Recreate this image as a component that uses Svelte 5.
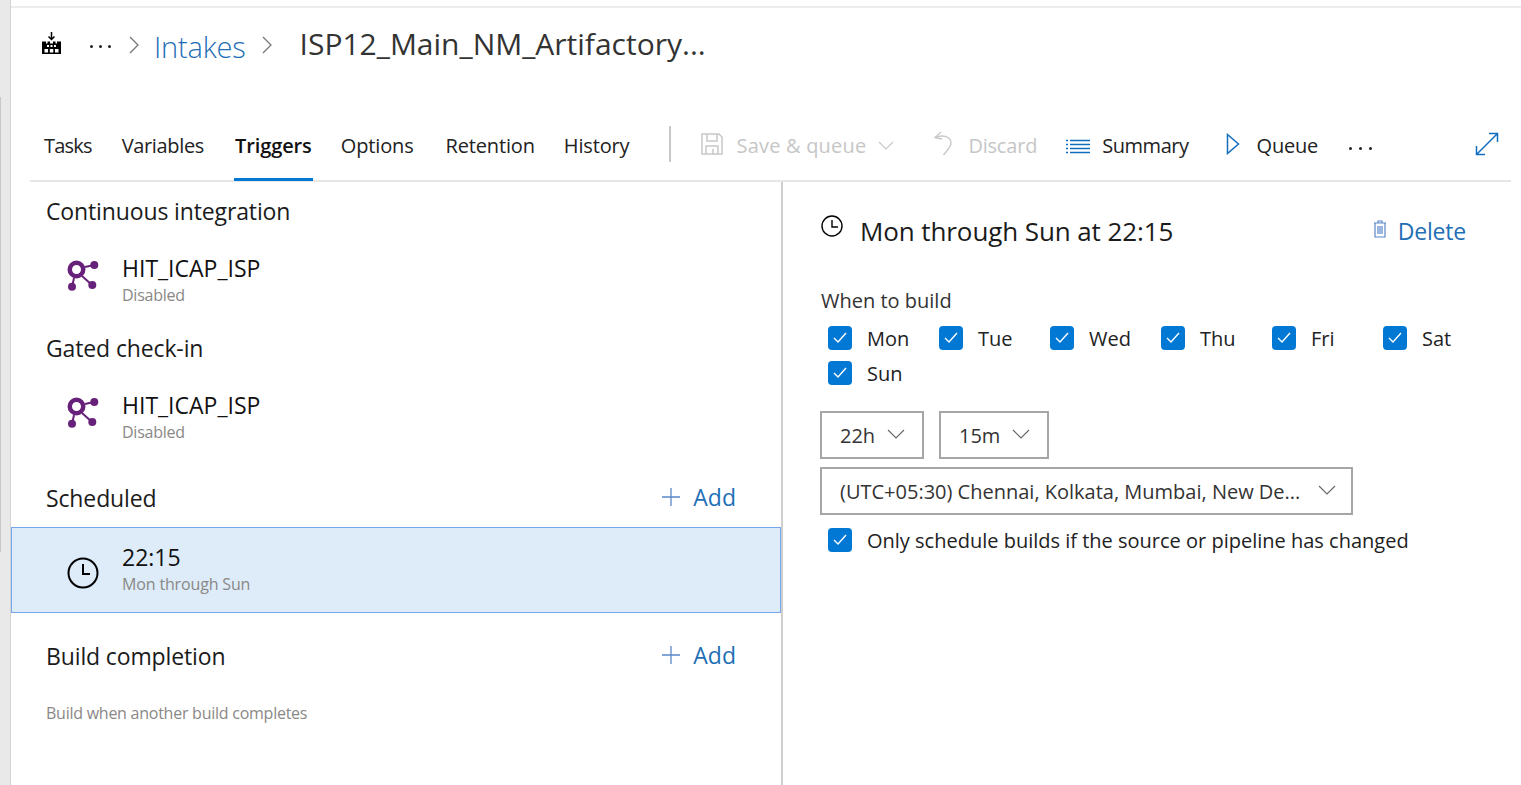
<script>
  const days1 = ['Mon','Tue','Wed','Thu','Fri','Sat'];
  const tabs = ['Tasks','Variables','Triggers','Options','Retention','History'];
</script>

{#snippet repoIcon()}
  <svg class="repo" viewBox="66 258 34 34" width="34" height="34">
    <g stroke="#68217a" fill="#68217a">
      <path d="M85 266l9-2M82 275l10 9M74 277l-2 9" stroke-width="2" fill="none"/>
      <circle cx="76.500" cy="268.500" r="6.750" fill="none" stroke-width="4.500"/>
      <circle cx="94.300" cy="264" r="4" stroke="none"/>
      <circle cx="92.300" cy="284" r="4" stroke="none"/>
      <circle cx="72" cy="285.700" r="4" stroke="none"/>
    </g>
  </svg>
{/snippet}

{#snippet tick()}
  <span class="box"><svg viewBox="0 0 14 11" width="14" height="11"><path d="M1 6l4 4 8-9" fill="none" stroke="#fff" stroke-width="1.400"/></svg></span>
{/snippet}

{#snippet caret()}
  <svg viewBox="0 0 18 10" width="18" height="10"><path d="M1 1l8 8 8-8" fill="none" stroke="#666" stroke-width="1.100"/></svg>
{/snippet}

{#snippet plus()}
  <svg viewBox="0 0 18 18" width="18" height="18"><path d="M9 0v18M0 9h18" stroke="#5b87c9" stroke-width="1.300"/></svg>
{/snippet}

<div class="page">
  <div class="gutter"><div class="gutter-mark"></div></div>
  <div class="main">
    <header class="crumbs">
      <svg class="factory" viewBox="0 0 19 22" width="19" height="22">
        <path d="M9.500 0v7M6.500 4.500l3 3 3-3" fill="none" stroke="#000" stroke-width="1.500"/>
        <path d="M0 22V9.500h4v2h1.500v-2h2.500v2h3v-2h2.500v2H15v-2h4V22z" fill="#000"/>
        <rect x="2.500" y="17" width="3.500" height="3.500" fill="#fff"/><rect x="7.800" y="17" width="3.500" height="3.500" fill="#fff"/><rect x="13" y="17" width="3.500" height="3.500" fill="#fff"/>
        <rect x="5" y="13" width="2" height="2" fill="#fff"/><rect x="8.500" y="13" width="2" height="2" fill="#fff"/><rect x="12" y="13" width="2" height="2" fill="#fff"/>
      </svg>
      <span class="dots crumb-dots"><i></i><i></i><i></i></span>
      <svg class="chev" viewBox="0 0 10 18" width="10" height="18"><path d="M1 1l8 8-8 8" fill="none" stroke="#777" stroke-width="1.300"/></svg>
      <span class="intakes">Intakes</span>
      <svg class="chev chev2" viewBox="0 0 10 18" width="10" height="18"><path d="M1 1l8 8-8 8" fill="none" stroke="#777" stroke-width="1.300"/></svg>
      <span class="title">ISP12_Main_NM_Artifactory...</span>
    </header>

    <nav class="bar">
      <div class="tabs">
        {#each tabs as t}
          <span class="tab" class:active={t === 'Triggers'}>{t}</span>
        {/each}
      </div>
      <div class="vsep"></div>
      <div class="cmd disabled save">
        <svg class="lift" viewBox="0 0 22 22" width="22" height="22"><path d="M1 1h17l3 3v17H1zM6 1v7h10V1M5 21v-8h12v8M12 16v5" fill="none" stroke="#c8c8c8" stroke-width="1.500"/></svg>
        <span>Save &amp; queue</span>
        <svg class="dd" viewBox="0 0 16 9" width="16" height="9"><path d="M1 1l7 7 7-7" fill="none" stroke="#c8c8c8" stroke-width="1.200"/></svg>
      </div>
      <div class="cmd disabled discard">
        <svg class="lift" viewBox="0 0 20 26" width="20" height="26"><path d="M8 1L2 6.500l7 1.500M2.500 6.500C10 3 18 6 18 12c0 4-3 6-7.500 12" fill="none" stroke="#c8c8c8" stroke-width="1.400"/></svg>
        <span>Discard</span>
      </div>
      <div class="cmd summary">
        <svg class="sum" viewBox="0 0 24 16" width="24" height="16"><path d="M4 1.500h20M4 5.500h20M4 9.500h20M4 13.500h20M0 1.500h2M0 5.500h2M0 9.500h2M0 13.500h2" fill="none" stroke="#106ebe" stroke-width="1.300"/></svg>
        <span>Summary</span>
      </div>
      <div class="cmd queue">
        <svg class="lift" viewBox="0 0 14 22" width="14" height="22"><path d="M1.500 1.500L12.500 11 1.500 20.500z" fill="none" stroke="#106ebe" stroke-width="1.500"/></svg>
        <span>Queue</span>
      </div>
      <span class="dots bar-dots"><i></i><i></i><i></i></span>
      <svg class="expand" viewBox="0 0 24 24" width="24" height="24"><path d="M1.500 22.500L22.500 1.500M14 1.500h8.500V10M1.500 14v8.500H10" fill="none" stroke="#106ebe" stroke-width="1.500"/></svg>
    </nav>

    <div class="panels">
      <section class="left">
        <h2 class="h first">Continuous integration</h2>
        <div class="item repo-item">
          {@render repoIcon()}
          <div class="txt"><div class="name">HIT_ICAP_ISP</div><div class="sub">Disabled</div></div>
        </div>
        <h2 class="h gated">Gated check-in</h2>
        <div class="item repo-item">
          {@render repoIcon()}
          <div class="txt"><div class="name">HIT_ICAP_ISP</div><div class="sub">Disabled</div></div>
        </div>
        <div class="h-row sched">
          <h2 class="h">Scheduled</h2>
          <span class="add">{@render plus()}Add</span>
        </div>
        <div class="item selected">
          <svg class="sel-clock" viewBox="0 0 32 32" width="32" height="32"><circle cx="16" cy="16" r="14.500" fill="none" stroke="#000" stroke-width="2"/><path d="M16 7v10h7" fill="none" stroke="#000" stroke-width="2"/></svg>
          <div class="txt"><div class="name">22:15</div><div class="sub">Mon through Sun</div></div>
        </div>
        <div class="h-row completion">
          <h2 class="h">Build completion</h2>
          <span class="add">{@render plus()}Add</span>
        </div>
        <p class="hint">Build when another build completes</p>
      </section>

      <section class="right">
        <div class="detail-head">
          <svg class="clock" viewBox="0 0 22 22" width="22" height="22"><circle cx="11" cy="11" r="10" fill="none" stroke="#000" stroke-width="1.400"/><path d="M11 5v7h6" fill="none" stroke="#000" stroke-width="1.400"/></svg>
          <h1>Mon through Sun at 22:15</h1>
          <span class="delete">
            <svg viewBox="0 0 14 18" width="14" height="18"><path d="M1 3h12M5 3V1h4v2M2 3v14h10V3M5 6v8M7 6v8M9 6v8" fill="none" stroke="#5b87c9" stroke-width="1.200"/></svg>
            Delete
          </span>
        </div>
        <div class="label">When to build</div>
        <div class="days">
          {#each days1 as d}
            <label class="check day">{@render tick()}{d}</label>
          {/each}
          <label class="check day">{@render tick()}Sun</label>
        </div>
        <div class="times">
          <div class="select hour">22h{@render caret()}</div>
          <div class="select minute">15m{@render caret()}</div>
        </div>
        <div class="select tz">(UTC+05:30) Chennai, Kolkata, Mumbai, New De...{@render caret()}</div>
        <label class="check only">{@render tick()}Only schedule builds if the source or pipeline has changed</label>
      </section>
    </div>
  </div>
</div>

<style>
  :global(body) { margin: 0; background: #fff; overflow: hidden; }
  .page {
    display: flex; width: 1521px; height: 785px; overflow: hidden;
    font-family: "Open Sans", "Noto Sans", sans-serif; color: #1e1e1e; background: #fff;
  }
  .gutter { width: 10px; flex: none; background: #e9e9e9; border-right: 1px solid #d4d4d4; position: relative; }
  .gutter-mark { position: absolute; left: 0; top: 97px; width: 1px; height: 455px; background: #c8c8c8; }
  .main { flex: 1; display: flex; flex-direction: column; min-width: 0; border-top: 1px solid transparent; position: relative; }
  .main::before { content: ""; position: absolute; left: 0; right: 0; top: 5px; height: 2px; background: #ececec; }

  .crumbs { height: 76px; padding: 4px 0 3px 31px; display: flex; align-items: center; flex: none; box-sizing: content-box; }
  .factory { flex: none; margin-top: -1px; }
  .dots { display: inline-flex; gap: 6px; }
  .dots i { width: 3px; height: 3px; border-radius: 50%; background: #222; display: block; }
  .crumb-dots { margin-left: 29px; margin-top: 6px; }
  .chev { margin-left: 18px; flex: none; margin-top: 4px; }
  .intakes { margin-left: 15px; margin-top: 6px; font-size: 29px; font-weight: 300; color: #1f6fb5; letter-spacing: -0.2px; }
  .chev2 { margin-left: 16px; }
  .title { margin-left: 28px; font-size: 30px; color: #333; letter-spacing: 0; white-space: nowrap; }

  .bar { height: 98px; margin-left: 19px; margin-right: 10px; display: flex; align-items: center; border-bottom: 2px solid #e6e6e6; box-sizing: border-box; flex: none; position: relative; }
  .tabs { display: flex; align-self: flex-end; height: 64px; }
  .tab { padding: 0 2px; margin: 0 13px; font-size: 20px; color: #222; letter-spacing: -0.15px; line-height: 60px; height: 62px; white-space: nowrap; box-sizing: content-box; }
  .tab:first-child { margin-left: 12px; margin-right: 13px; letter-spacing: -0.8px; }
  .tab:nth-child(2) { margin-right: 15px; letter-spacing: -0.35px; }
  .tab.active { font-weight: 600; padding: 0 1px; margin: 0 13px 0 13px; border-bottom: 3px solid #0078d4; color: #111; letter-spacing: -0.1px; }
  .tab:nth-child(5) { margin-left: 15px; }
  .tab:nth-child(6) { margin-left: 12px; }
  .vsep { width: 2px; height: 36px; background: #c8c8c8; margin-left: 25px; align-self: flex-end; margin-bottom: 18px; }
  .cmd { display: flex; align-items: center; font-size: 20px; letter-spacing: -0.2px; color: #222; white-space: nowrap; align-self: flex-end; height: 64px; padding-bottom: 6px; box-sizing: border-box; }
  .lift { margin-bottom: 2px; }
  .sum { margin-top: 4px; }
  .disabled { color: #c6c6c6; }
  .save { margin-left: 30px; }
  .save span { margin-left: 13px; letter-spacing: 0.2px; }
  .save .dd { margin-left: 12px; }
  .discard { margin-left: 39px; }
  .discard span { margin-left: 15px; }
  .summary { margin-left: 29px; }
  .summary span { margin-left: 12px; letter-spacing: -0.45px; }
  .queue { margin-left: 37px; }
  .queue span { margin-left: 17px; }
  .bar-dots { margin-left: 31px; gap: 7px; align-self: flex-end; margin-bottom: 30px; }
  .expand { margin-left: auto; margin-right: 12px; align-self: flex-end; margin-bottom: 24px; }

  .panels { flex: 1; display: flex; min-height: 0; }
  .left { width: 770px; flex: none; }
  .right { flex: 1; border-left: 2px solid #cfcfcf; padding-left: 38px; padding-right: 45px; min-width: 0; }

  .h { margin: 0; font-size: 23px; font-weight: 400; color: #1b1b1b; letter-spacing: -0.13px; line-height: 30px; }
  .first { padding: 14px 0 0 35px; }
  .gated { padding: 11px 0 0 35px; }
  .item { display: flex; align-items: center; height: 85px; padding-left: 55px; box-sizing: border-box; }
  .repo-item { margin-top: 11px; }
  .repo-item .txt { margin-left: 22px; }
  .repo { margin-bottom: 8px; }
  .txt { margin-left: 23px; }
  .name { font-size: 23px; color: #111; letter-spacing: 0; line-height: 30px; }
  .sub { font-size: 16px; color: #8a8886; letter-spacing: -0.25px; line-height: 22px; margin-top: 1px; }
  .selected { background: #deecf9; border: 1px solid #76a8ee; height: 86px; margin-top: 12px; padding-left: 55px; }
  .selected .txt { padding-bottom: 4px; }
  .selected .sub { letter-spacing: -0.15px; }
  .sel-clock { margin-top: 6px; }
  .h-row { display: flex; justify-content: space-between; align-items: center; padding: 0 45px 0 35px; }
  .sched { margin-top: 22px; }
  .completion { margin-top: 26px; }
  .add { display: flex; align-items: center; gap: 13px; font-size: 23px; color: #1f6fb5; letter-spacing: 0; margin-bottom: 2px; }
  .hint { margin: 29px 0 0 35px; font-size: 16px; color: #8a8886; letter-spacing: -0.25px; }

  .detail-head { display: flex; align-items: flex-start; padding-top: 31px; margin-left: -1px; margin-right: 10px; }
  .clock { margin-top: 2px; flex: none; margin-left: 1px; }
  .detail-head h1 { margin: 0 0 0 17px; font-size: 26px; font-weight: 400; color: #1b1b1b; letter-spacing: -0.1px; line-height: 36px; white-space: nowrap; }
  .delete { margin-left: auto; display: flex; align-items: center; gap: 11px; font-size: 23px; color: #1f6fb5; letter-spacing: -0.2px; line-height: 36px; }
  .delete svg { margin-bottom: 4px; }
  .label { margin-top: 38px; font-size: 20px; color: #333; letter-spacing: 0; line-height: 28px; }
  .days { display: flex; flex-wrap: wrap; width: 666px; margin-top: 6px; }
  .check { display: flex; align-items: center; font-size: 20px; color: #222; letter-spacing: 0; white-space: nowrap; }
  .day { width: 111px; height: 35px; padding-left: 7px; box-sizing: border-box; }
  .box { width: 24px; height: 24px; border-radius: 4px; background: #0078d4; display: flex; align-items: center; justify-content: center; margin-right: 15px; margin-bottom: 2px; flex: none; }
  .times { display: flex; gap: 15px; margin-top: 20px; margin-left: -1px; }
  .select { border: 2px solid #a6a6a6; height: 48px; box-sizing: border-box; display: flex; align-items: center; padding: 0 17px 0 18px; font-size: 20px; letter-spacing: 0; color: #333; white-space: nowrap; }
  .select svg { flex: none; margin-bottom: 3px; }
  .hour { width: 104px; justify-content: space-between; }
  .minute { width: 110px; justify-content: space-between; }
  .tz { width: 533px; margin-top: 8px; margin-left: -1px; justify-content: space-between; padding-right: 15px; }
  .only { margin-top: 8px; padding-left: 7px; height: 35px; }
</style>
